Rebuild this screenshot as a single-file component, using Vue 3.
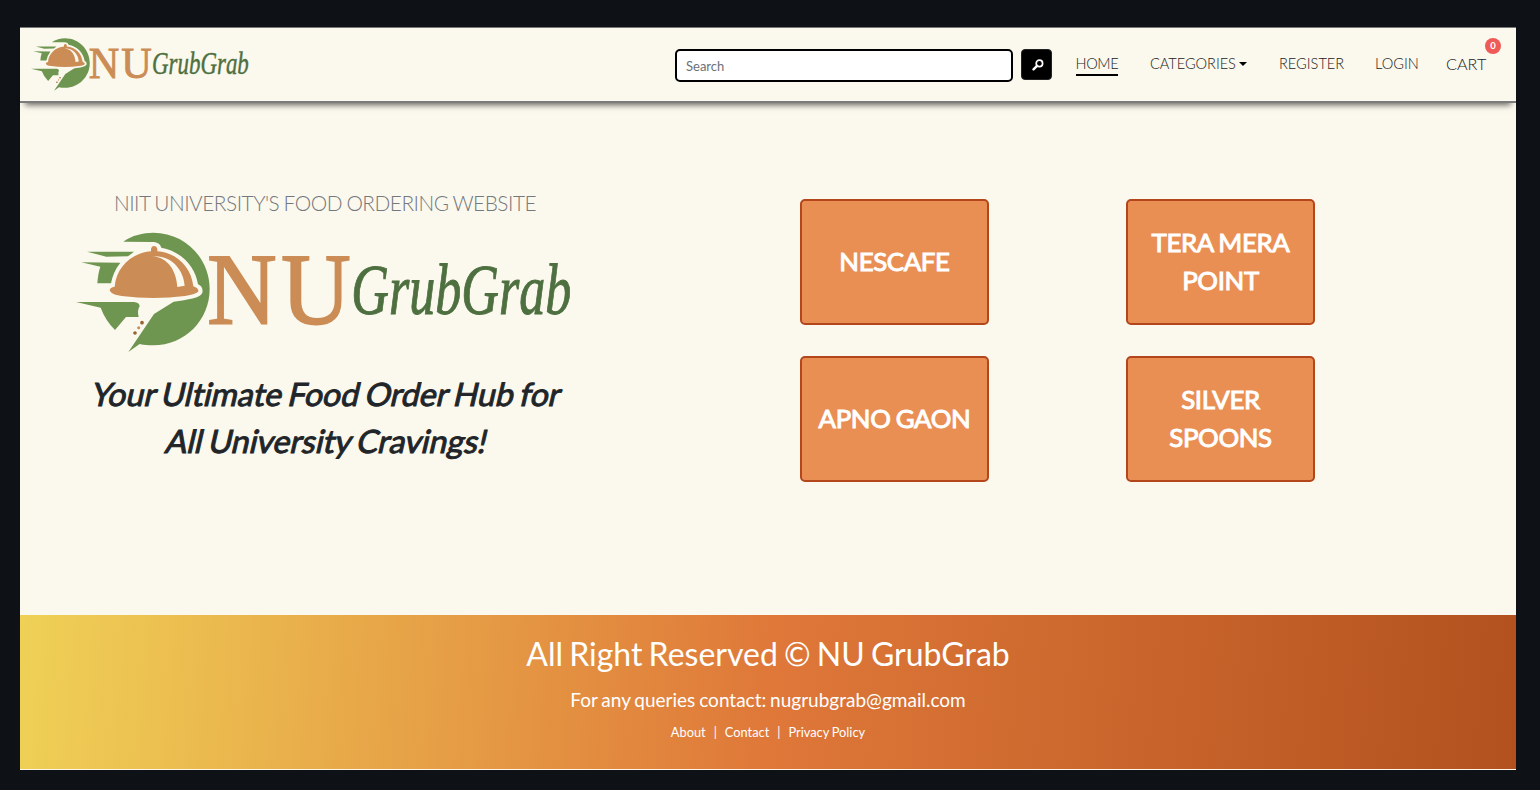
<script setup>
import { h } from 'vue'

const outlets = ['NESCAFE', 'TERA MERA POINT', 'APNO GAON', 'SILVER SPOONS']
const tagline = ['Your Ultimate Food Order Hub for', 'All University Cravings!']

const green = '#6f9651'
const copper = '#cb8c55'
const cream = '#fbf8ed'
const shape = (d, fill) => h('path', { d, fill })
const word = (text, x, y, size, length, extra) =>
  h('text', { x, y, 'font-size': size, textLength: length, lengthAdjust: 'spacingAndGlyphs', 'font-family': 'Liberation Serif, serif', ...extra }, text)

const BrandLogo = () =>
  h('svg', { viewBox: '18 150 1494 375', overflow: 'visible', role: 'img', 'aria-label': 'NU GrubGrab' }, [
    shape('M160 185C185 166 220 158 250 158C344 158 419 234 419 327C419 421 344 496 250 496C236 496 223 495 209 492L175 516L205 472L252 402L311 365C355 358 390 355 397 338C400 326 393 316 384 313C376 258 330 212 274 203C270 191 261 186 245 186Z', green),
    shape('M51 215L192 215L174 229L109 230Z', green),
    shape('M34 247L151 248Q129 276 123 310L82 310Q84 280 91 260Z', green),
    shape('M18 366L192 366Q208 367 209 379Q201 390 206 411L168 411L135 450Q106 421 92 383Z', green),
    shape('M134 320C139 260 187 218 243 214L243 207Q245 198 252 198Q260 198 262 207L262 214C322 218 364 263 370 319Q386 325 385 334C382 340 366 345 345 348Q250 360 155 348C133 345 121 339 119 330Q120 323 134 320Z', copper),
    shape('M247 229C294 232 319 273 322 321L344 317C341 268 302 223 247 229Z', cream),
    h('circle', { cx: 216, cy: 428, r: 5.5, fill: '#966333' }),
    h('circle', { cx: 206, cy: 443, r: 4.5, fill: copper }),
    h('circle', { cx: 195, cy: 459, r: 5.5, fill: '#966333' }),
    word('N', 412, 432, 307, 208, { fill: copper, stroke: copper, 'stroke-width': 6 }),
    word('U', 634, 432, 307, 208, { fill: copper, stroke: copper, 'stroke-width': 6 }),
    word('GrubGrab', 844, 401, 218, 660, { fill: '#4e7040', stroke: '#4e7040', 'stroke-width': 3, 'font-style': 'italic' }),
  ])
</script>

<template>
  <div class="frame">
    <div class="page">
      <header class="bar">
        <BrandLogo class="brand" />
        <form class="search" @submit.prevent>
          <input type="text" placeholder="Search" />
          <button type="submit" aria-label="Search">
            <svg viewBox="0 0 12 12" width="12" height="12">
              <circle cx="7.4" cy="4.4" r="3.2" fill="none" stroke="#fff" stroke-width="1.7" />
              <path d="M5 6.9L1.5 10.3" stroke="#fff" stroke-width="2.4" stroke-linecap="round" />
            </svg>
          </button>
        </form>
        <nav>
          <a class="home active">HOME</a>
          <a class="categories">CATEGORIES<i class="caret"></i></a>
          <a class="register">REGISTER</a>
          <a class="login">LOGIN</a>
          <a class="cart">CART<b class="badge">0</b></a>
        </nav>
      </header>

      <main>
        <section class="intro">
          <h2>NIIT UNIVERSITY'S FOOD ORDERING WEBSITE</h2>
          <BrandLogo class="hero-logo" />
          <p class="tagline"><span v-for="line in tagline" :key="line">{{ line }}</span></p>
        </section>
        <section class="outlets">
          <a v-for="name in outlets" :key="name" class="outlet">{{ name }}</a>
        </section>
      </main>

      <footer>
        <h3>All Right Reserved © NU GrubGrab</h3>
        <p class="contact">For any queries contact: nugrubgrab@gmail.com</p>
        <p class="links"><a>About</a><span>|</span><a>Contact</a><span>|</span><a>Privacy Policy</a></p>
      </footer>
    </div>
  </div>
</template>

<style>
body { background: #0e1116; }
</style>

<style scoped>
* { box-sizing: border-box; }
h2, h3, p { margin: 0; font-weight: 400; }
.frame { height: 790px; padding: 27px 24px 20px 20px; background: #0e1116; font-family: Lato, sans-serif; font-variant-ligatures: none; overflow: hidden; }
.page { height: 743px; display: flex; flex-direction: column; background: #fbf8ed; }
.bar { height: 76px; flex: none; display: flex; align-items: flex-start; border-top: 1px solid #777; border-bottom: 2px solid #7b7b7b; box-shadow: 0 7px 6px -5px rgba(0, 0, 0, .6); }
.brand { width: 219px; height: 55px; margin: 9px 0 0 10.5px; flex: none; }
.search { display: flex; margin: 21px 0 0 425.5px; gap: 8px; }
.search input { width: 338px; height: 33px; border: 2px solid #000; border-radius: 5px; background: #fff; padding: 0 9px; font: 13px Lato, sans-serif; outline: none; }
.search input::placeholder { color: #6c7177; opacity: 1; }
.search button { width: 31px; height: 31px; padding: 0; border: 1px solid #222; border-radius: 4px; background: #000; display: flex; align-items: center; justify-content: center; }
.search button svg { margin: 1px 0 0 3px; }
nav { display: flex; margin: 26px 0 0 23.5px; font-size: 14.6px; line-height: 20px; font-weight: 300; color: #222; white-space: nowrap; }
nav a { height: 22px; flex: none; }
.home { width: 42.5px; margin-right: 32px; letter-spacing: -.35px; }
.active { border-bottom: 2px solid #000; }
.categories { width: 97px; margin-right: 32px; letter-spacing: -.05px; }
.caret { display: inline-block; margin-left: 3px; vertical-align: 3px; border: 4px solid transparent; border-top-color: #000; border-bottom: 0; }
.register { width: 65px; margin-right: 31px; }
.login { width: 43px; margin-right: 28px; }
.cart { position: relative; font-size: 16.2px; width: 40px; }
.badge { position: absolute; left: 39px; top: -16px; width: 16px; height: 16px; border-radius: 50%; background: #ee5a57; color: #fff; font-size: 9.5px; line-height: 16px; text-align: center; font-weight: 700; }
main { flex: 1; display: flex; align-items: flex-start; }
.intro { width: 610px; padding-top: 86px; display: flex; flex-direction: column; align-items: center; text-align: center; }
h2 { font-size: 20.8px; line-height: 28px; font-weight: 300; color: #74797e; white-space: nowrap; letter-spacing: -.48px; word-spacing: -.8px; }
.hero-logo { width: 498px; height: 125px; margin: 13px 0 0 0; }
.tagline { margin: 15px 0 0 5px; font-size: 32.1px; line-height: 47px; color: #212529; -webkit-text-stroke: 1px #212529; word-spacing: -2.1px; }
.tagline span { display: block; transform: skewX(-13deg); white-space: nowrap; }
.outlets { margin: 96px 0 0 170px; display: grid; grid-template-columns: 189px 189px; column-gap: 137px; row-gap: 31px; }
.outlet { height: 126px; padding: 0 12px 2px; display: flex; align-items: center; justify-content: center; text-align: center; border: 2px solid #b3461b; border-radius: 5px; background: #ea8f54; color: #fff; font-size: 25.8px; line-height: 38px; letter-spacing: -.35px; word-spacing: -1px; -webkit-text-stroke: 1px #fff; }
footer { height: 155px; flex: none; padding-top: 16px; text-align: center; color: #fff; background: linear-gradient(95deg, #efd156 0%, #df7839 50%, #b2511e 100%); border-bottom: 1px solid #fff5e8; }
h3 { font-size: 32px; line-height: 46px; word-spacing: -2px; }
.contact { margin-top: 8px; font-size: 19px; line-height: 30px; word-spacing: -1px; }
.links { margin-top: 7px; font-size: 12.8px; line-height: 20px; display: flex; justify-content: center; gap: 8px; word-spacing: -.5px; }
</style>
